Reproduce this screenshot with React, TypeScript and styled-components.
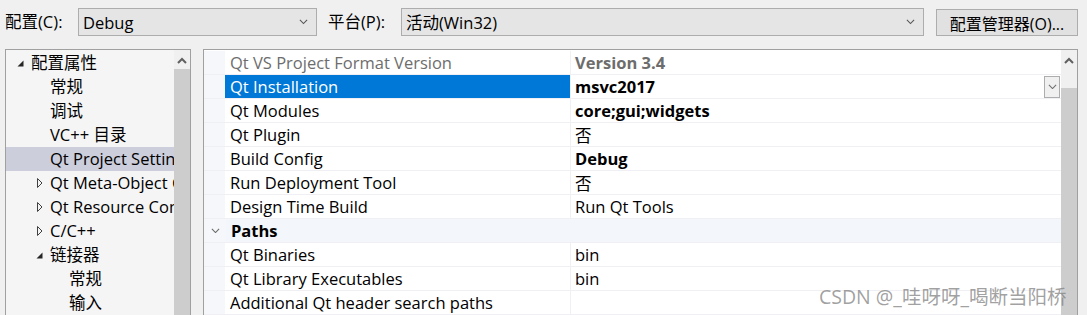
import styled, { createGlobalStyle } from 'styled-components';

const GlobalStyle = createGlobalStyle`
  html, body {
    margin: 0;
    padding: 0;
    background: #f0f0f0;
  }
`;

const FONT = `"Open Sans", "Noto Sans CJK SC", sans-serif`;

type TreeItem = { label: string; level: number; expander?: 'open' | 'closed'; selected?: boolean };

const treeItems: TreeItem[] = [
  { label: '配置属性', level: 0, expander: 'open' },
  { label: '常规', level: 1 },
  { label: '调试', level: 1 },
  { label: 'VC++ 目录', level: 1 },
  { label: 'Qt Project Settings', level: 1, selected: true },
  { label: 'Qt Meta-Object Compiler', level: 1, expander: 'closed' },
  { label: 'Qt Resource Compiler', level: 1, expander: 'closed' },
  { label: 'C/C++', level: 1, expander: 'closed' },
  { label: '链接器', level: 1, expander: 'open' },
  { label: '常规', level: 2 },
  { label: '输入', level: 2 },
];

type PropRow =
  | { kind: 'prop'; name: string; value: string; bold?: boolean; muted?: boolean; selected?: boolean; dropdown?: boolean }
  | { kind: 'category'; name: string };

const propRows: PropRow[] = [
  { kind: 'prop', name: 'Qt VS Project Format Version', value: 'Version 3.4', bold: true, muted: true },
  { kind: 'prop', name: 'Qt Installation', value: 'msvc2017', bold: true, selected: true, dropdown: true },
  { kind: 'prop', name: 'Qt Modules', value: 'core;gui;widgets', bold: true },
  { kind: 'prop', name: 'Qt Plugin', value: '否' },
  { kind: 'prop', name: 'Build Config', value: 'Debug', bold: true },
  { kind: 'prop', name: 'Run Deployment Tool', value: '否' },
  { kind: 'prop', name: 'Design Time Build', value: 'Run Qt Tools' },
  { kind: 'category', name: 'Paths' },
  { kind: 'prop', name: 'Qt Binaries', value: 'bin' },
  { kind: 'prop', name: 'Qt Library Executables', value: 'bin' },
  { kind: 'prop', name: 'Additional Qt header search paths', value: '' },
];

const Chevron = ({ size = 9, color = '#555' }: { size?: number; color?: string }) => (
  <svg width={size} height={size / 2 + 1} viewBox="0 0 10 6">
    <path d="M1 1 L5 5 L9 1" fill="none" stroke={color} strokeWidth="1.2" />
  </svg>
);

const ChevronUp = () => (
  <svg width="10" height="7" viewBox="0 0 10 7">
    <path d="M1 6 L5 2 L9 6" fill="none" stroke="#606060" strokeWidth="2" />
  </svg>
);

const Expander = ({ state }: { state: 'open' | 'closed' }) =>
  state === 'open' ? (
    <svg width="7" height="7" viewBox="0 0 7 7">
      <path d="M6.5 0.5 L6.5 6.5 L0.5 6.5 Z" fill="#262626" />
    </svg>
  ) : (
    <svg width="6" height="10" viewBox="0 0 6 10">
      <path d="M0.5 0.5 L5 5 L0.5 9.5 Z" fill="none" stroke="#404040" strokeWidth="1" />
    </svg>
  );

export default function App() {
  return (
    <Page>
      <GlobalStyle />
      <TopBar>
        <Label>配置(C):</Label>
        <Select $width={239}>
          <span>Debug</span>
          <Chevron />
        </Select>
        <Label $gap={11}>平台(P):</Label>
        <Select $width={523}>
          <span>活动(Win32)</span>
          <Chevron />
        </Select>
        <Button>配置管理器(O)...</Button>
      </TopBar>
      <Body>
        <TreePanel>
          <TreeList>
            {treeItems.map((item, i) => (
              <TreeRow key={i} $selected={item.selected}>
                <ExpanderSlot $level={item.level}>
                  {item.expander && <Expander state={item.expander} />}
                </ExpanderSlot>
                <TreeLabel>{item.label}</TreeLabel>
              </TreeRow>
            ))}
          </TreeList>
          <ScrollBar $thumbTop={19}>
            <ScrollArrow>
              <ChevronUp />
            </ScrollArrow>
          </ScrollBar>
        </TreePanel>
        <PropPanel>
          <Grid>
            {propRows.map((row, i) =>
              row.kind === 'category' ? (
                <CategoryRow key={i}>
                  <Gutter $category>
                    <Chevron color="#6a6a6a" size={9} />
                  </Gutter>
                  <CategoryName>{row.name}</CategoryName>
                </CategoryRow>
              ) : (
                <Row key={i}>
                  <Gutter />
                  <NameCell $selected={row.selected} $muted={row.muted}>
                    {row.name}
                  </NameCell>
                  <ValueCell $bold={row.bold} $muted={row.muted}>
                    <span>{row.value}</span>
                    {row.dropdown && (
                      <DropButton>
                        <Chevron size={9} color="#707070" />
                      </DropButton>
                    )}
                  </ValueCell>
                </Row>
              ),
            )}
          </Grid>
          <ScrollBar $thumbTop={38}>
            <ScrollArrow>
              <ChevronUp />
            </ScrollArrow>
          </ScrollBar>
        </PropPanel>
      </Body>
      <Watermark>CSDN @_哇呀呀_喝断当阳桥</Watermark>
    </Page>
  );
}

const Page = styled.div`
  position: relative;
  width: 1087px;
  height: 315px;
  overflow: hidden;
  background: #f0f0f0;
  font-family: ${FONT};
  font-size: 16.5px;
  color: #000;
`;

const TopBar = styled.div`
  height: 49px;
  display: flex;
  align-items: flex-start;
  padding: 8px 0 0 5px;
  box-sizing: border-box;
`;

const Label = styled.div<{ $gap?: number }>`
  height: 28px;
  line-height: 28px;
  margin-left: ${({ $gap }) => $gap ?? 0}px;
  width: 73px;
`;

const Select = styled.div<{ $width: number }>`
  width: ${({ $width }) => $width}px;
  height: 28px;
  box-sizing: border-box;
  border: 1px solid #adadad;
  background: #e5e5e5;
  display: flex;
  align-items: center;
  justify-content: space-between;
  padding: 0 8px 0 4px;
`;

const Button = styled.div`
  margin-left: 12px;
  margin-top: 1px;
  width: 142px;
  height: 27px;
  box-sizing: border-box;
  border: 1px solid #adadad;
  background: #e1e1e1;
  display: flex;
  align-items: center;
  justify-content: center;
  font-size: 16px;
  white-space: nowrap;
`;

const Body = styled.div`
  display: flex;
  padding-left: 5px;
  gap: 12px;
  height: 300px;
`;

const TreePanel = styled.div`
  width: 186px;
  box-sizing: border-box;
  border: 1px solid #a0a0a0;
  background: #f5f5f5;
  display: flex;
  padding-top: 1px;
`;

const TreeList = styled.div`
  flex: 1;
  overflow: hidden;
`;

const TreeRow = styled.div<{ $selected?: boolean }>`
  height: 24px;
  display: flex;
  align-items: center;
  white-space: nowrap;
  background: ${({ $selected }) => ($selected ? '#cccedb' : 'transparent')};
`;

const ExpanderSlot = styled.div<{ $level: number }>`
  flex: 0 0 auto;
  width: ${({ $level }) => 25 + $level * 19}px;
  display: flex;
  justify-content: flex-end;
  align-items: center;
  padding-right: 7px;
  box-sizing: border-box;
`;

const TreeLabel = styled.span`
  line-height: 24px;
`;

const ScrollBar = styled.div<{ $thumbTop: number }>`
  flex: 0 0 16px;
  width: 16px;
  align-self: stretch;
  margin-top: -1px;
  background: linear-gradient(
    to bottom,
    #f0f0f0 0,
    #f0f0f0 ${({ $thumbTop }) => $thumbTop}px,
    #cdcdcd ${({ $thumbTop }) => $thumbTop}px
  );
`;

const ScrollArrow = styled.div`
  height: 17px;
  display: flex;
  align-items: center;
  justify-content: center;
  padding-top: 2px;
`;

const PropPanel = styled.div`
  width: 875px;
  box-sizing: border-box;
  border: 1px solid #a0a0a0;
  background: #fff;
  display: flex;
  padding-top: 1px;
`;

const Grid = styled.div`
  flex: 1;
  overflow: hidden;
`;

const Row = styled.div`
  height: 24px;
  display: flex;
  box-sizing: border-box;
  border-bottom: 1px solid #f0f0f4;
`;

const Gutter = styled.div<{ $category?: boolean }>`
  flex: 0 0 21px;
  background: #f5f7fa;
  display: flex;
  align-items: center;
  justify-content: center;
  padding-left: ${({ $category }) => ($category ? 1 : 0)}px;
`;

const NameCell = styled.div<{ $selected?: boolean; $muted?: boolean }>`
  flex: 0 0 346px;
  box-sizing: border-box;
  padding-left: 5px;
  line-height: 23px;
  white-space: nowrap;
  border-right: 1px solid #f0f0f4;
  background: ${({ $selected }) => ($selected ? '#0078d7' : '#fff')};
  color: ${({ $selected, $muted }) => ($selected ? '#fff' : $muted ? '#6d6d6d' : '#000')};
`;

const ValueCell = styled.div<{ $bold?: boolean; $muted?: boolean }>`
  flex: 1;
  display: flex;
  align-items: center;
  justify-content: space-between;
  padding-left: 4px;
  padding-right: 1px;
  white-space: nowrap;
  font-weight: ${({ $bold }) => ($bold ? 700 : 400)};
  color: ${({ $muted }) => ($muted ? '#6d6d6d' : '#000')};
`;

const DropButton = styled.div`
  width: 16px;
  height: 22px;
  box-sizing: border-box;
  border: 1px solid #adadad;
  background: #f0f0f0;
  display: flex;
  align-items: center;
  justify-content: center;
`;

const CategoryRow = styled.div`
  height: 24px;
  display: flex;
  background: #f3f6fa;
  box-sizing: border-box;
  border-bottom: 1px solid #f0f0f4;
`;

const CategoryName = styled.div`
  padding-left: 5px;
  line-height: 23px;
  font-weight: 700;
`;

const Watermark = styled.div`
  position: absolute;
  left: 819px;
  top: 284px;
  font-size: 19.5px;
  line-height: 26px;
  color: rgba(130, 130, 130, 0.75);
  white-space: nowrap;
`;
